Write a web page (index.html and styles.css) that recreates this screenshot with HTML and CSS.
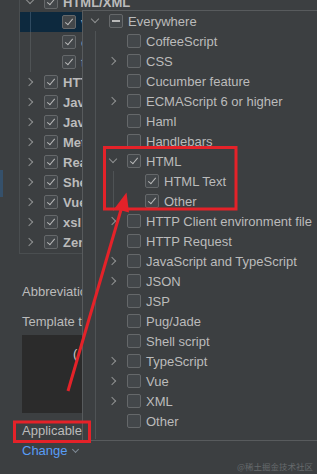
FILE: index.html
```html
<!DOCTYPE html>
<html>
  <head>
    <meta charset="utf-8">
    <title>Live Templates</title>
    <link rel="stylesheet" href="styles.css">
  </head>
  <body>
    <div class="page">
      <div class="side"><div class="side-sel"></div></div>
      <div class="main">
        <div class="tree">
          <div class="row"><span class="tog d"></span><span class="cb on"></span><span class="lbl b">HTML/XML</span></div>
          <div class="kids">
            <div class="row sel"><span class="tog"></span><span class="cb on"></span><span class="lbl">vbase</span></div>
            <div class="row"><span class="tog"></span><span class="cb on"></span><span class="lbl">comment</span></div>
            <div class="row"><span class="tog"></span><span class="cb on"></span><span class="lbl">table</span></div>
          </div>
          <div class="row"><span class="tog r"></span><span class="cb on"></span><span class="lbl b">HTTP Request</span></div>
          <div class="row"><span class="tog r"></span><span class="cb on"></span><span class="lbl b">Java</span></div>
          <div class="row"><span class="tog r"></span><span class="cb on"></span><span class="lbl b">JavaScript</span></div>
          <div class="row"><span class="tog r"></span><span class="cb on"></span><span class="lbl b">Meteor</span></div>
          <div class="row"><span class="tog r"></span><span class="cb on"></span><span class="lbl b">React</span></div>
          <div class="row"><span class="tog r"></span><span class="cb on"></span><span class="lbl b">Shell Script</span></div>
          <div class="row"><span class="tog r"></span><span class="cb on"></span><span class="lbl b">Vue</span></div>
          <div class="row"><span class="tog r"></span><span class="cb on"></span><span class="lbl b">xsl</span></div>
          <div class="row"><span class="tog r"></span><span class="cb on"></span><span class="lbl b">Zen CSS</span></div>
        </div>

        <div class="form">
          <div class="field field-first">Abbreviation:</div>
          <div class="field">Template text:</div>
          <div class="editor"><span class="code">(</span></div>
          <div class="field field-applic">Applicable in HTML</div>
          <a class="link">Change <span class="chev"></span></a>
        </div>
      </div>
    </div>

    <div class="popup">
      <div class="row"><span class="tog d"></span><span class="cb mixed"></span><span class="lbl">Everywhere</span></div>
      <div class="kids">
        <div class="row"><span class="tog"></span><span class="cb"></span><span class="lbl">CoffeeScript</span></div>
        <div class="row"><span class="tog r"></span><span class="cb"></span><span class="lbl">CSS</span></div>
        <div class="row"><span class="tog"></span><span class="cb"></span><span class="lbl">Cucumber feature</span></div>
        <div class="row"><span class="tog r"></span><span class="cb"></span><span class="lbl">ECMAScript 6 or higher</span></div>
        <div class="row"><span class="tog"></span><span class="cb"></span><span class="lbl">Haml</span></div>
        <div class="row"><span class="tog"></span><span class="cb"></span><span class="lbl">Handlebars</span></div>
        <div class="row"><span class="tog d"></span><span class="cb on"></span><span class="lbl">HTML</span></div>
        <div class="kids">
          <div class="row"><span class="tog"></span><span class="cb on"></span><span class="lbl">HTML Text</span></div>
          <div class="row"><span class="tog"></span><span class="cb on"></span><span class="lbl">Other</span></div>
        </div>
        <div class="row"><span class="tog r"></span><span class="cb"></span><span class="lbl">HTTP Client environment file</span></div>
        <div class="row"><span class="tog"></span><span class="cb"></span><span class="lbl">HTTP Request</span></div>
        <div class="row"><span class="tog r"></span><span class="cb"></span><span class="lbl">JavaScript and TypeScript</span></div>
        <div class="row"><span class="tog r"></span><span class="cb"></span><span class="lbl">JSON</span></div>
        <div class="row"><span class="tog"></span><span class="cb"></span><span class="lbl">JSP</span></div>
        <div class="row"><span class="tog"></span><span class="cb"></span><span class="lbl">Pug/Jade</span></div>
        <div class="row"><span class="tog"></span><span class="cb"></span><span class="lbl">Shell script</span></div>
        <div class="row"><span class="tog r"></span><span class="cb"></span><span class="lbl">TypeScript</span></div>
        <div class="row"><span class="tog r"></span><span class="cb"></span><span class="lbl">Vue</span></div>
        <div class="row"><span class="tog r"></span><span class="cb"></span><span class="lbl">XML</span></div>
        <div class="row"><span class="tog"></span><span class="cb"></span><span class="lbl">Other</span></div>
      </div>
    </div>

    <svg class="marks" width="317" height="474" viewBox="0 0 317 474">
      <rect x="104.5" y="147.5" width="131.5" height="61.5" />
      <rect x="14.5" y="422" width="75" height="19.5" />
      <line x1="68" y1="391" x2="121.5" y2="208" />
      <polygon points="126.5,192.5 114.5,208.5 129,212.5" />
    </svg>

    <div class="watermark">@稀土掘金技术社区</div>
  </body>
</html>
```

FILE: styles.css
```css
body {
  --bg: #3c3f41;
  --text: #bbbbbb;
  --guide: #4f5355;
  --cb-border: #65686a;
  --cb-bg: #43474a;
  --arrow: #8e9091;
  --red: #e42229;
  margin: 0;
  width: 317px;
  height: 474px;
  overflow: hidden;
  position: relative;
  background-color: var(--bg);
  color: var(--text);
  font-family: "Liberation Sans", Arial, sans-serif;
  font-size: 13px;
}

.page {
  display: flex;
}

.side {
  width: 19px;
  flex: none;
}

.side-sel {
  margin-top: 170px;
  width: 3px;
  height: 27px;
  background-color: #35506a;
}

.main {
  flex: 1;
  min-width: 0;
}

/* tree rows, shared by the list and the popup */
.row {
  display: flex;
  align-items: center;
  height: 20px;
  padding-left: var(--pad, 5px);
  white-space: nowrap;
}

.tog {
  width: 14px;
  height: 14px;
  flex: none;
  display: flex;
  align-items: center;
  justify-content: center;
}

.tog.r::before,
.tog.d::before {
  content: "";
  width: 5px;
  height: 5px;
  border-right: 1.3px solid var(--arrow);
  border-bottom: 1.3px solid var(--arrow);
}

.tog.r::before {
  transform: translateX(-1px) rotate(-45deg);
}

.tog.d::before {
  transform: translateY(-2px) rotate(45deg);
}

.cb {
  width: 14px;
  height: 14px;
  flex: none;
  margin-left: 7px;
  box-sizing: border-box;
  border: 1px solid var(--cb-border);
  border-radius: 2px;
  background-color: var(--cb-bg);
  display: flex;
  align-items: center;
  justify-content: center;
}

.cb.on::after {
  content: "";
  width: 3px;
  height: 7px;
  margin-top: -2px;
  border-right: 1.6px solid #b9b9b9;
  border-bottom: 1.6px solid #b9b9b9;
  transform: rotate(40deg);
}

.cb.mixed::after {
  content: "";
  width: 8px;
  height: 2px;
  background-color: #b9b9b9;
}

.lbl {
  margin-left: 5px;
}

.lbl.b {
  font-weight: bold;
}

.kids {
  margin-left: 12px;
  padding-left: 5px;
  border-left: 1px solid var(--guide);
}

/* left template list */
.tree {
  --pad: 3px;
  margin-top: -8px;
  padding-bottom: 1px;
  border-left: 1px solid #4a4e50;
  border-bottom: 1px solid #4a4e50;
}

.tree .kids {
  margin-left: 10px;
  padding-left: 7px;
}

.tree .row.sel {
  margin-left: -18px;
  padding-left: 21px;
  background: linear-gradient(to right, transparent 10px, #2f4a60 10px, #2f4a60 11px, transparent 11px), #0d293e;
}

/* template settings under the list */
.form {
  padding-left: 3px;
  display: flex;
  flex-direction: column;
}

.field {
  height: 20px;
  line-height: 20px;
  white-space: nowrap;
  margin-top: 10px;
}

.field-first {
  margin-top: 28px;
}

.editor {
  margin-top: 3px;
  height: 78px;
  background-color: #2b2b2b;
  padding: 9px 0 0 51px;
  box-sizing: border-box;
  line-height: 20px;
}

.code {
  color: #c8c8c8;
}

.field-applic {
  margin-top: 8px;
}

.link {
  height: 20px;
  line-height: 20px;
  color: #589df6;
  display: flex;
  align-items: center;
  gap: 3px;
}

.chev {
  width: 4px;
  height: 4px;
  margin-top: -3px;
  margin-left: 2px;
  border-right: 1.3px solid #7f8a95;
  border-bottom: 1.3px solid #7f8a95;
  transform: rotate(45deg);
}

/* popup with the context tree */
.popup {
  position: absolute;
  top: 10px;
  left: 82px;
  width: 236px;
  height: 431px;
  box-sizing: border-box;
  border: 1px solid #585b5d;
  background-color: var(--bg);
}

.popup > .kids {
  padding-bottom: 8px;
}

/* red annotations drawn over the screenshot */
.marks {
  position: absolute;
  top: 0;
  left: 0;
  pointer-events: none;
}

.marks rect,
.marks line {
  fill: none;
  stroke: var(--red);
  stroke-width: 3;
}

.marks polygon {
  fill: var(--red);
}

.watermark {
  position: absolute;
  right: 4px;
  bottom: 2px;
  font-family: "Noto Sans CJK SC", sans-serif;
  font-size: 8.5px;
  color: #666a6c;
}
```
